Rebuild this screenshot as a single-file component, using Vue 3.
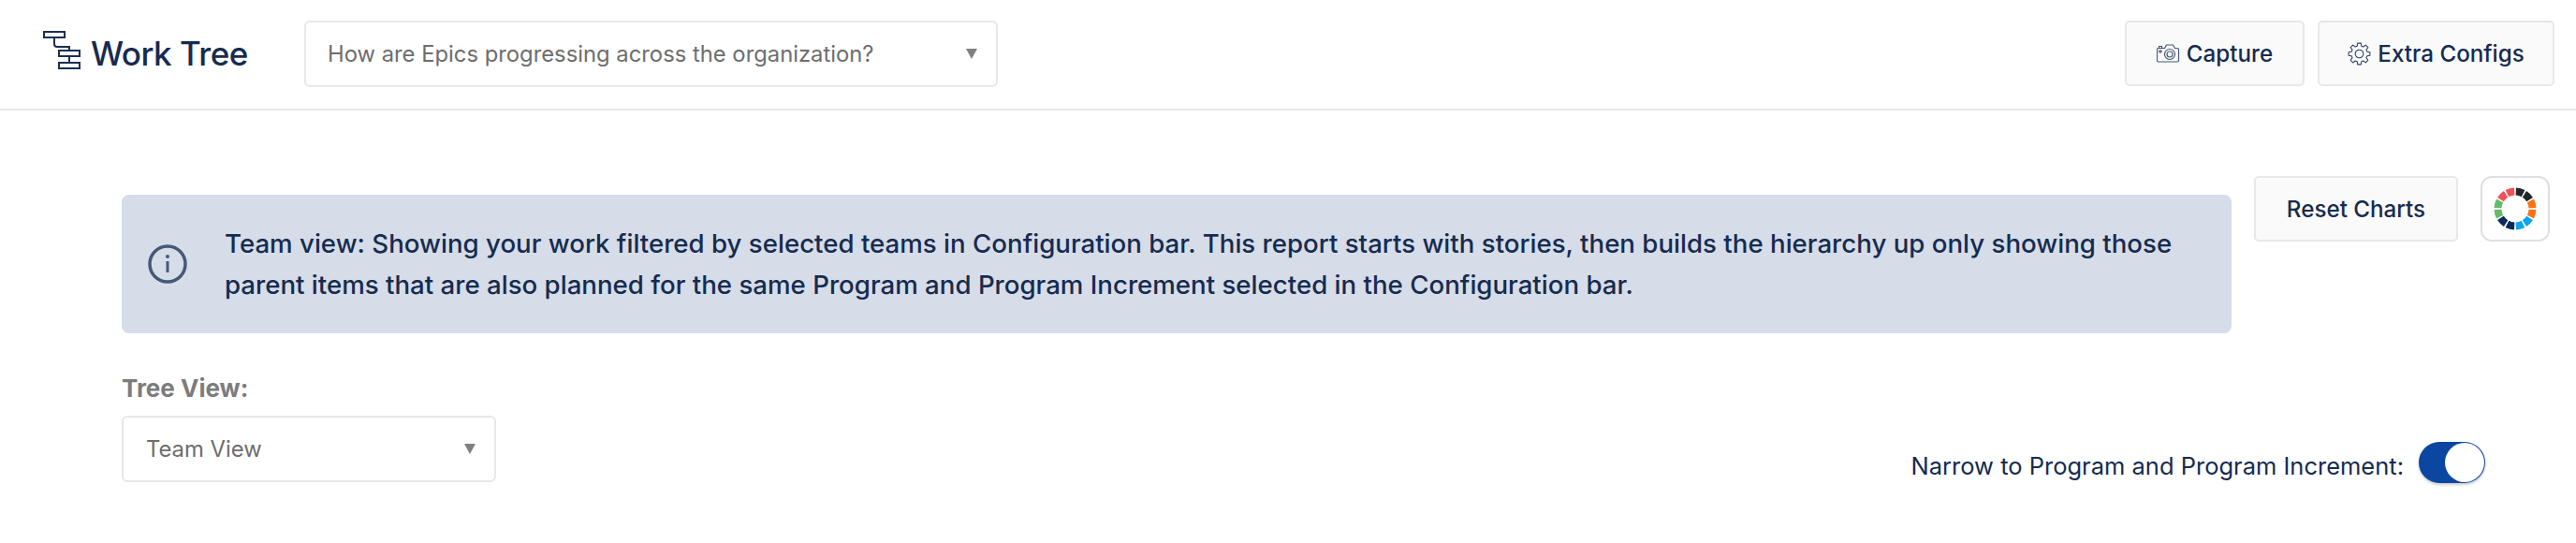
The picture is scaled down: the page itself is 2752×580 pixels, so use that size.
<script setup>
const ringColors = ["#222629", "#222629", "#f97316", "#f97316", "#0ea5e9", "#0ea5e9", "#0b2a5b", "#0b2a5b", "#66bb6a", "#66bb6a", "#f0525a", "#f0525a"];

// ring of the colour theme button, 12 separated arcs
const ring = ringColors.map((color, i) => {
  const a = ((i * 30 + 2.5 - 90) * Math.PI) / 180;
  const b = ((i * 30 + 27.5 - 90) * Math.PI) / 180;
  const r = 18.5;
  const d = `M${(r * Math.cos(a)).toFixed(2)} ${(r * Math.sin(a)).toFixed(2)}A${r} ${r} 0 0 1 ${(r * Math.cos(b)).toFixed(2)} ${(r * Math.sin(b)).toFixed(2)}`;
  return { color, d };
});

// gear outline, 8 teeth
let gear = "";
for (let i = 0; i < 8; i++) {
  const c = i * 45 - 90;
  const pts = [[9, c - 15], [12, c - 9], [12, c + 9], [9, c + 15]];
  pts.forEach(([r, deg], j) => {
    const t = (deg * Math.PI) / 180;
    gear += `${i === 0 && j === 0 ? "M" : "L"}${(r * Math.cos(t)).toFixed(2)} ${(r * Math.sin(t)).toFixed(2)}`;
  });
}
gear += "Z";
</script>

<template>
  <div class="page">
    <header class="topbar">
      <div class="brand">
        <svg class="brand-icon" width="40" height="41" viewBox="0 0 40 41" fill="none" stroke="#1a2f55" stroke-width="2">
          <rect x="1" y="1" width="22" height="6" />
          <rect x="17" y="21" width="22" height="6" />
          <rect x="17" y="34" width="22" height="6" />
          <path d="M12 7v7q0 3 3 3h13v4M28 27v7" />
        </svg>
        <span class="brand-name">Work Tree</span>
      </div>
      <div class="select question">
        <span>How are Epics progressing across the organization?</span>
        <i class="caret"></i>
      </div>
      <div class="top-actions">
        <button class="btn capture">
          <svg width="25" height="20" viewBox="0 0 25 20" fill="none" stroke="#46587a" stroke-width="1.2">
            <path d="M2.500 4.500h6l2-3.500h7l2 3.500h2.500q1.500 0 1.500 1.500v11.500q0 1.500-1.500 1.500h-20q-1.500 0-1.500-1.500v-11.500q0-1.500 1.500-1.500z" />
            <circle cx="14" cy="11" r="5.500" />
            <circle cx="14" cy="11" r="3" />
            <circle cx="4" cy="8" r="1.200" />
            <path d="M2.500 4.500v-2h3v2" />
          </svg>
          Capture
        </button>
        <button class="btn configs">
          <svg width="25" height="25" viewBox="-13 -13 26 26" fill="none" stroke="#2c3f63" stroke-width="1.100">
            <path :d="gear" stroke-linejoin="round" />
            <circle r="4.500" />
          </svg>
          Extra Configs
        </button>
      </div>
    </header>

    <main class="content">
      <div class="notice-row">
        <div class="notice">
          <svg class="notice-icon" width="42" height="42" viewBox="0 0 42 42" fill="none">
            <circle cx="21" cy="21" r="19" stroke="#46587a" stroke-width="3.500" />
            <circle cx="21" cy="13" r="2" fill="#46587a" />
            <rect x="19.500" y="18" width="3" height="12" fill="#46587a" />
          </svg>
          <p>Team view: Showing your work filtered by selected teams in Configuration bar. This report starts with stories, then builds the hierarchy up only showing those parent items that are also planned for the same Program and Program Increment selected in the Configuration bar.</p>
        </div>
        <div class="chart-actions">
          <button class="btn reset">Reset Charts</button>
          <button class="theme-btn">
            <svg width="50" height="50" viewBox="-25 -25 50 50" fill="none">
              <path v-for="(s, i) in ring" :key="i" :d="s.d" :stroke="s.color" stroke-width="8" />
            </svg>
          </button>
        </div>
      </div>

      <div class="filter-row">
        <div class="tree-view">
          <label>Tree View:</label>
          <div class="select view">
            <span>Team View</span>
            <i class="caret"></i>
          </div>
        </div>
        <div class="narrow">
          <span class="narrow-label">Narrow to Program and Program Increment:</span>
          <span class="toggle"><i></i></span>
        </div>
      </div>
    </main>
  </div>
</template>

<style>
html,
body {
  background: #fff;
}
</style>

<style scoped>
.page {
  width: 2752px;
  height: 580px;
  overflow: hidden;
  font-family: Inter, "Liberation Sans", sans-serif;
  color: #162b50;
}
.topbar {
  height: 118px;
  box-sizing: border-box;
  border-bottom: 2px solid #e8e8e8;
  display: flex;
  align-items: flex-start;
  padding: 22px 23px 0 46px;
}
.brand {
  width: 279px;
  height: 70px;
  display: flex;
  align-items: center;
  gap: 11px;
}
.brand-icon {
  margin-bottom: 8px;
}
.brand-name {
  font-size: 35px;
  font-weight: 500;
  letter-spacing: -0.5px;
}
.select {
  box-sizing: border-box;
  background: #fff;
  border: 2px solid #e8e8e8;
  border-radius: 6px;
  display: flex;
  align-items: center;
  justify-content: space-between;
  color: #6e6e6e;
  font-size: 23.8px;
  height: 71px;
}
.question {
  width: 741px;
  padding: 0 20px 0 23px;
}
.view {
  width: 400px;
  padding: 0 20px 0 24px;
}
.caret {
  width: 0;
  height: 0;
  border-left: 6px solid transparent;
  border-right: 6px solid transparent;
  border-top: 11px solid #808080;
}
.top-actions {
  margin-left: auto;
  display: flex;
  gap: 14px;
}
.btn {
  box-sizing: border-box;
  height: 70px;
  background: #fafafa;
  border: 2px solid #e8e8e8;
  border-radius: 5px;
  display: flex;
  align-items: center;
  justify-content: center;
  gap: 7px;
  font-family: inherit;
  font-size: 24.2px;
  font-weight: 500;
  color: #162b50;
}
.capture {
  width: 192px;
}
.configs {
  width: 253px;
}
.reset {
  width: 218px;
}
.content {
  padding: 70px 28px 0 130px;
}
.notice-row {
  display: flex;
  align-items: flex-start;
}
.notice {
  width: 2254px;
  height: 148px;
  box-sizing: border-box;
  margin-top: 20px;
  background: #d6dde8;
  border-radius: 8px;
  display: flex;
  align-items: center;
  padding: 0 28px;
  gap: 40px;
  flex-shrink: 0;
}
.notice-icon {
  flex-shrink: 0;
}
.notice p {
  margin: 0;
  font-size: 27.65px;
  font-weight: 500;
  line-height: 44px;
}
.chart-actions {
  display: flex;
  margin-left: 24px;
  gap: 24px;
}
.theme-btn {
  box-sizing: border-box;
  width: 74px;
  height: 70px;
  padding: 0;
  background: #fff;
  border: 2px solid #e0e0e0;
  border-radius: 12px;
  display: flex;
  align-items: center;
  justify-content: center;
}
.filter-row {
  display: flex;
  justify-content: space-between;
  align-items: flex-end;
  padding-right: 69px;
  margin-top: 42px;
}
.tree-view label {
  display: block;
  font-size: 26px;
  font-weight: 700;
  color: #7c7c7c;
  line-height: 34px;
  margin-bottom: 12px;
}
.narrow {
  display: flex;
  align-items: center;
  gap: 16px;
  font-size: 25.5px;
  margin-bottom: -1px;
}
.narrow-label {
  padding-top: 6px;
}
.toggle {
  box-sizing: border-box;
  width: 71px;
  height: 44px;
  background: #0b47a1;
  border-radius: 22px;
  display: flex;
  justify-content: flex-end;
  padding: 1px;
  box-shadow: 0 2px 3px rgba(0, 0, 0, 0.2);
}
.toggle i {
  width: 42px;
  height: 42px;
  border-radius: 50%;
  background: #fff;
}
</style>
